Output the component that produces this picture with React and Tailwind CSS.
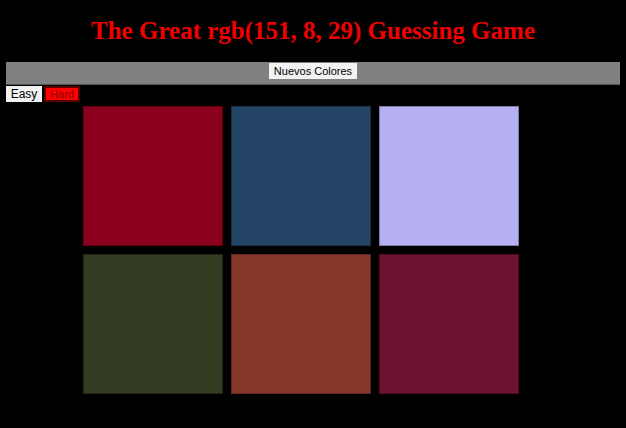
export default function App() {
   const colors = [
      "#8a001d",
      "#244466",
      "#b5b0ef",
      "#333b20",
      "#863829",
      "#6d132f",
   ];

   return (
      <div className="min-h-screen w-full bg-black pt-[14px]" style={{ height: 428 }}>
         {/* Title */}
         <h1 className="text-center text-[25px] leading-[34px] font-bold text-[#f00000] font-['Liberation_Serif',serif]">
            The Great rgb(151, 8, 29) Guessing Game
         </h1>

         {/* Top bar */}
         <div className="mx-[6px] mt-[14px] h-[23px] bg-[#808080] border-b border-[#555] flex justify-center">
            <button className="h-[16px] mt-[1px] px-[5px] bg-[#f2f2f2] text-[11px] leading-[16px] text-black font-['Liberation_Sans',sans-serif]">
               Nuevos Colores
            </button>
         </div>

         {/* Mode buttons */}
         <div className="flex gap-[2px] pl-[6px] mt-[1px]">
            <button className="h-[16px] w-[36px] bg-[#f2f2f2] text-[12px] leading-[16px] text-black font-['Liberation_Sans',sans-serif]">
               Easy
            </button>
            <button className="h-[16px] w-[36px] bg-[#ff0000] border-2 border-[#5a0000] text-[11px] leading-[12px] text-[#8b0000] font-['Liberation_Sans',sans-serif]">
               Hard
            </button>
         </div>

         {/* Squares */}
         <div className="ml-[83px] mt-[4px] w-[436px] grid grid-cols-3 gap-[8px]">
            {colors.map((c, i) => (
               <div
                  key={i}
                  className="w-[140px] h-[140px] border border-black/30"
                  style={{ backgroundColor: c }}
               />
            ))}
         </div>
      </div>
   );
}
